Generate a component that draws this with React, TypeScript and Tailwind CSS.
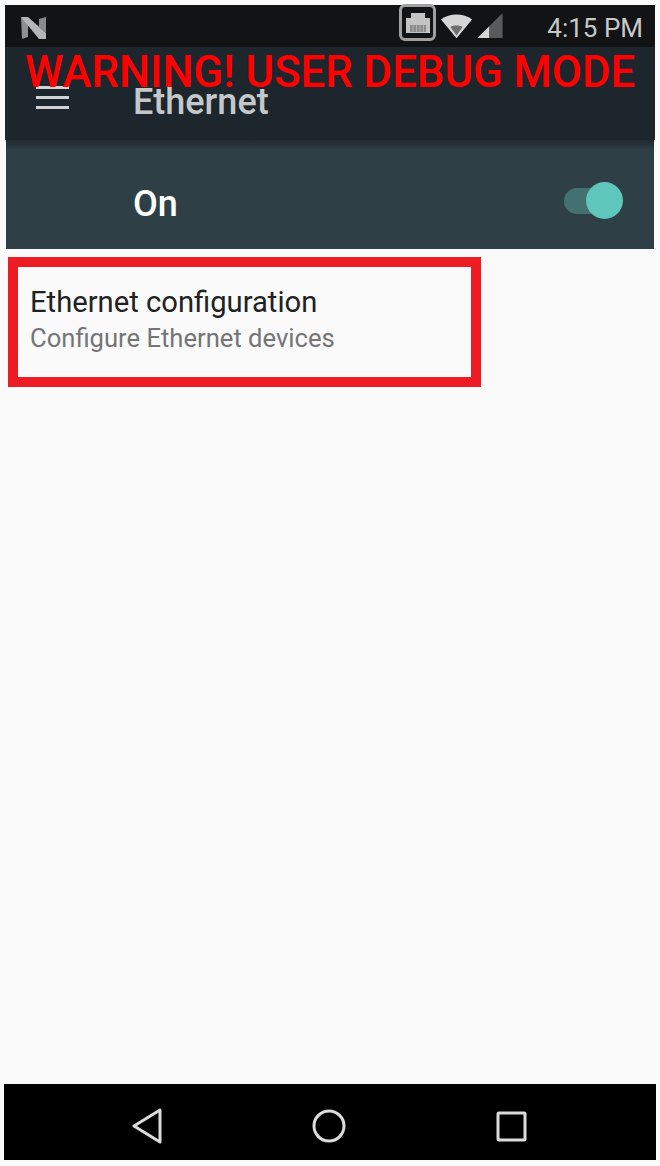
const roboto = "font-['Roboto',sans-serif]";

function StatusBar() {
  return (
    <div className="flex h-[42px] items-center bg-[#111314] pl-[15px] pr-[12px]">
      <svg width="28" height="24" viewBox="0 0 28 24" className="mt-[4px]">
        <path d="M1 1 L8 3 L8 21 L2 23 Z" fill="#8f8f8f" />
        <path d="M1 1 L8 1 L26 17 L26 23 L19 23 Z" fill="#b5b5b5" />
        <path d="M19 3 L26 1 L26 17 L19 11 Z" fill="#8a8a8a" />
      </svg>
      <div className="ml-auto flex h-[37px] w-[37px] items-center justify-center rounded-[6px] border-[3px] border-[#a0a0a0] -mt-[7px]">
        <svg width="26" height="22" viewBox="0 0 26 22">
          <path d="M1 6 H6 V1 H20 V6 H25 V21 H1 Z" fill="#c4c4c4" />
          <path d="M5 13 H21 V20 H5 Z" fill="#8c8c8c" />
          <path d="M8 13 V20 M11.5 13 V20 M15 13 V20 M18.5 13 V20" stroke="#b0b0b0" strokeWidth="1" />
        </svg>
      </div>
      <svg width="32" height="26" viewBox="0 0 34 26" className="ml-[5px] -mt-[1px]">
        <path d="M0 6 C9 -1 24 -1 33 6 L16.5 26 Z" fill="#d6d6d6" />
        <path d="M10 14 C14 12 19 12 23 14 L16.5 23 Z" fill="#6f6f6f" />
      </svg>
      <svg width="27" height="26" viewBox="0 0 27 27" className="ml-[4px] -mt-[1px]">
        <path d="M0 26 L26 0 V26 Z" fill="#5a5a5a" />
        <path d="M0 26 L12 14 V26 Z" fill="#d6d6d6" />
      </svg>
      <span className={`${roboto} ml-[43px] mt-[3px] text-[26px] leading-none text-[#c8c8c8]`}>4:15 PM</span>
    </div>
  );
}

function Toolbar() {
  return (
    <div className="relative flex h-[93px] items-center bg-[#1e262d]">
      <span className={`${roboto} absolute left-[20px] top-[2px] whitespace-nowrap text-[43.7px] font-medium leading-[46px] text-[#ff0000]`}>
        WARNING! USER DEBUG MODE
      </span>
      <div className="mb-[-8px] ml-[31px] flex w-[33px] flex-col gap-[7px]">
        <div className="h-[3px] bg-[#d0d2d3]" />
        <div className="h-[3px] bg-[#d0d2d3]" />
        <div className="h-[3px] bg-[#d0d2d3]" />
      </div>
      <span className={`${roboto} ml-[64px] mb-[-17px] text-[36px] font-medium leading-none text-[#c5c8ca]`}>Ethernet</span>
    </div>
  );
}

function SwitchBar() {
  return (
    <div className="mx-[1px] flex flex-col">
      <div className="h-[10px] bg-linear-to-b from-[#20292f] to-[#2f3f46]" />
      <div className="flex h-[99px] items-center bg-[#2f3f46] pl-[127px] pr-[37px]">
        <span className={`${roboto} text-[36px] font-medium leading-none text-white mt-[8px]`}>On</span>
        <div className="relative ml-auto mt-[3px] h-[26px] w-[53px] rounded-full bg-[#43716f]">
          <div className="absolute -right-[6px] -top-[6px] h-[37px] w-[37px] rounded-full bg-[#5fc6bb]" />
        </div>
      </div>
    </div>
  );
}

export default function App() {
  return (
    <div className={`${roboto} flex h-[1166px] w-[660px] flex-col overflow-hidden bg-[#fafafa] pt-[5px]`}>
      <div className="mx-[5px] flex flex-col">
        <StatusBar />
        <Toolbar />
        <SwitchBar />
      </div>
      <div className="ml-[8px] mt-[8px] flex h-[130px] w-[473px] flex-col border-[10px] border-[#ed1c24] pl-[12px] pt-[19px]">
        <span className="text-[29.2px] leading-[32px] text-[#212121]">Ethernet configuration</span>
        <span className="mt-[5px] text-[25.6px] leading-[30px] text-[#757575]">Configure Ethernet devices</span>
      </div>
      <div className="flex-1" />
      <div className="mx-[4px] mb-[6px] flex h-[76px] items-center bg-black pt-[8px]">
        <svg width="32" height="36" viewBox="0 0 32 36" className="ml-[127px]" fill="none" stroke="#dcdcdc" strokeWidth="3" strokeLinejoin="round">
          <path d="M29 2 V34 L3 18 Z" />
        </svg>
        <svg width="34" height="34" viewBox="0 0 34 34" className="ml-[149px]" fill="none" stroke="#dcdcdc" strokeWidth="3">
          <circle cx="17" cy="17" r="15" />
        </svg>
        <svg width="31" height="31" viewBox="0 0 31 31" className="ml-[150px]" fill="none" stroke="#dcdcdc" strokeWidth="3" strokeLinejoin="round">
          <rect x="2" y="2" width="27" height="27" rx="1" />
        </svg>
      </div>
    </div>
  );
}
